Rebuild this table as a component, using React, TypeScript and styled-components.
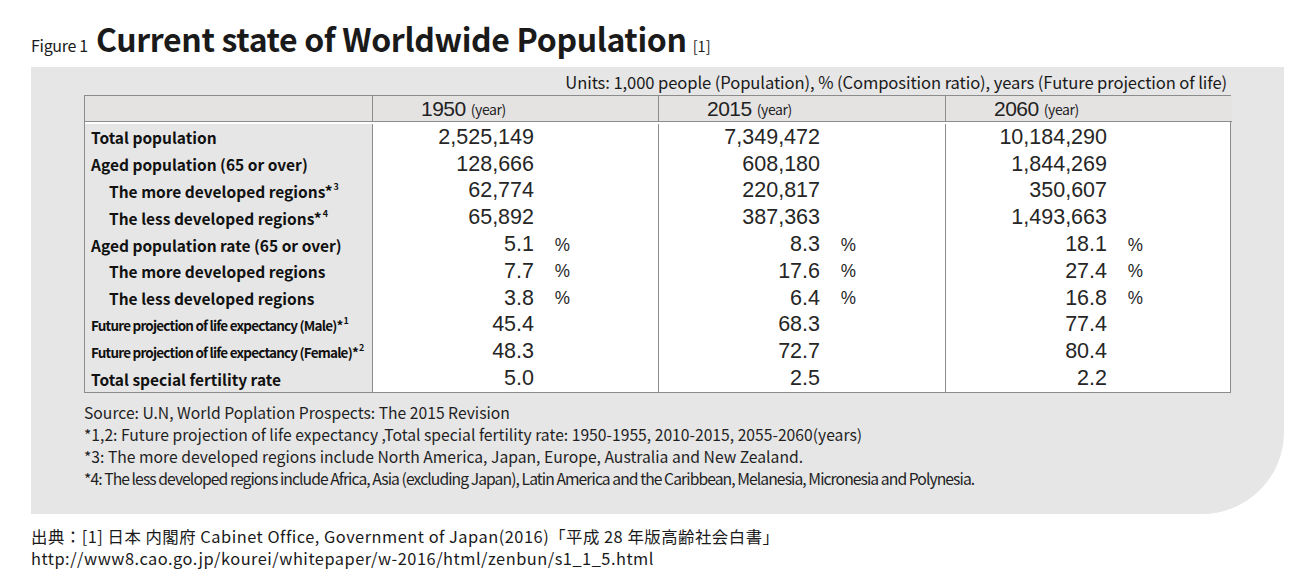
import React from "react";
import styled, { createGlobalStyle } from "styled-components";

const Global = createGlobalStyle`
  html, body { margin: 0; padding: 0; background: #ffffff; }
  body { font-family: "Noto Sans CJK JP", "Noto Sans", sans-serif; color: #1a1a1a; }
`;

const Page = styled.div`
  width: 1310px;
  height: 581px;
  padding: 22px 0 0 31px;
  box-sizing: border-box;
  overflow: hidden;
`;

const TitleRow = styled.div`
  display: flex;
  align-items: baseline;
  height: 45px;
`;

const FigLabel = styled.span`
  font-size: 16px;
  margin-right: 8px;
  letter-spacing: -0.3px;
`;

const Title = styled.h1`
  margin: 0;
  font-size: 32px;
  font-weight: 700;
  line-height: 1;
  letter-spacing: -0.35px;
`;

const Ref = styled.span`
  font-size: 14.5px;
  margin-left: 6px;
`;

const Panel = styled.div`
  width: 1253px;
  height: 447px;
  background: #e6e6e6;
  border-bottom-right-radius: 82px;
  box-sizing: border-box;
  padding: 3px 0 0 53px;
`;

const Units = styled.div`
  width: 1143px;
  text-align: right;
  font-size: 16.6px;
  line-height: 25px;
  height: 25px;
  letter-spacing: -0.1px;
  white-space: nowrap;
`;

const Table = styled.div`
  display: grid;
  grid-template-columns: 287px 286px 287px 287px;
  width: 1147px;
  border: 1px solid #8c8c8c;
  box-sizing: border-box;
  background: #ffffff;
`;

const HeadCell = styled.div<{ $first?: boolean }>`
  height: 25px;
  background: #e5e2e2;
  border-bottom: 1px solid #8c8c8c;
  border-left: ${(p) => (p.$first ? "none" : "1px solid #8c8c8c")};
  padding-left: 48px;
  display: flex;
  align-items: center;
  font-family: "Liberation Sans", Arial, sans-serif;
  color: #222;
`;

const Year = styled.span`
  font-size: 21px;
  letter-spacing: -0.5px;
`;

const YearUnit = styled.span`
  font-size: 14px;
  margin-left: 5px;
  font-family: "Noto Sans CJK JP", sans-serif;
  letter-spacing: -0.4px;
`;

const LabelCell = styled.div<{ $indent?: boolean; $narrow?: boolean; $top?: boolean }>`
  height: 26.8px;
  background: #e6e6e6;
  padding-left: ${(p) => (p.$indent ? 24 : 6)}px;
  display: flex;
  align-items: center;
  font-weight: 700;
  font-size: ${(p) => (p.$narrow ? 13.5 : 15.5)}px;
  letter-spacing: ${(p) => (p.$narrow ? "-0.8px" : "0")};
  white-space: nowrap;
  color: #111;
  margin-top: ${(p) => (p.$top ? 2 : 0)}px;
`;

const Sup = styled.span`
  font-size: 9px;
  position: relative;
  top: -4px;
  margin-left: 1px;
`;

const ValueCell = styled.div<{ $top?: boolean }>`
  height: 26.8px;
  border-left: 1px solid #8c8c8c;
  display: flex;
  align-items: center;
  font-family: "Liberation Sans", Arial, sans-serif;
  font-size: 21.5px;
  color: #262626;
  margin-top: ${(p) => (p.$top ? 2 : 0)}px;
`;

const Num = styled.span`
  width: 161px;
  text-align: right;
`;

const Pct = styled.span`
  margin-left: 20px;
  font-size: 19px;
  transform: scaleX(0.9);
  display: inline-block;
`;

const Notes = styled.div`
  margin-top: 9px;
  font-size: 15.7px;
  line-height: 22px;
  color: #1f1f1f;
`;

const Note = styled.div<{ $narrow?: boolean }>`
  letter-spacing: ${(p) => (p.$narrow ? "-0.93px" : "0")};
  white-space: nowrap;
`;

const Source = styled.div`
  margin-top: 11px;
  font-size: 16.4px;
  line-height: 22px;
  color: #1a1a1a;
  letter-spacing: 0.5px;
  white-space: nowrap;
`;

type Row = {
  label: string;
  sup?: string;
  indent?: boolean;
  narrow?: boolean;
  vals: string[];
  pct?: boolean;
};

const rows: Row[] = [
  { label: "Total population", vals: ["2,525,149", "7,349,472", "10,184,290"] },
  { label: "Aged population (65 or over)", vals: ["128,666", "608,180", "1,844,269"] },
  { label: "The more developed regions*", sup: "3", indent: true, vals: ["62,774", "220,817", "350,607"] },
  { label: "The less developed regions*", sup: "4", indent: true, vals: ["65,892", "387,363", "1,493,663"] },
  { label: "Aged population rate (65 or over)", vals: ["5.1", "8.3", "18.1"], pct: true },
  { label: "The more developed regions", indent: true, vals: ["7.7", "17.6", "27.4"], pct: true },
  { label: "The less developed regions", indent: true, vals: ["3.8", "6.4", "16.8"], pct: true },
  { label: "Future projection of life expectancy (Male)*", sup: "1", narrow: true, vals: ["45.4", "68.3", "77.4"] },
  { label: "Future projection of life expectancy (Female)*", sup: "2", narrow: true, vals: ["48.3", "72.7", "80.4"] },
  { label: "Total special fertility rate", vals: ["5.0", "2.5", "2.2"] },
];

const years = ["1950", "2015", "2060"];

export default function App() {
  return (
    <Page>
      <Global />
      <TitleRow>
        <FigLabel>Figure 1</FigLabel>
        <Title>Current state of Worldwide Population</Title>
        <Ref>[1]</Ref>
      </TitleRow>
      <Panel>
        <Units>Units: 1,000 people (Population), % (Composition ratio), years (Future projection of life)</Units>
        <Table>
          <HeadCell $first />
          {years.map((y) => (
            <HeadCell key={y}>
              <Year>{y}</Year>
              <YearUnit>(year)</YearUnit>
            </HeadCell>
          ))}
          {rows.map((r, i) => (
            <React.Fragment key={r.label}>
              <LabelCell $indent={r.indent} $narrow={r.narrow} $top={i === 0}>
                {r.label}
                {r.sup && <Sup>{r.sup}</Sup>}
              </LabelCell>
              {r.vals.map((v, j) => (
                <ValueCell key={j} $top={i === 0}>
                  <Num>{v}</Num>
                  {r.pct && <Pct>%</Pct>}
                </ValueCell>
              ))}
            </React.Fragment>
          ))}
        </Table>
        <Notes>
          <Note>Source: U.N, World Poplation Prospects: The 2015 Revision</Note>
          <Note>*1,2: Future projection of life expectancy ,Total special fertility rate: 1950-1955, 2010-2015, 2055-2060(years)</Note>
          <Note>*3: The more developed regions include North America, Japan, Europe, Australia and New Zealand.</Note>
          <Note $narrow>*4: The less developed regions include Africa, Asia (excluding Japan), Latin America and the Caribbean, Melanesia, Micronesia and Polynesia.</Note>
        </Notes>
      </Panel>
      <Source>
        <div>出典：[1] 日本 内閣府 Cabinet Office, Government of Japan(2016)「平成 28 年版高齢社会白書」</div>
        <div>http://www8.cao.go.jp/kourei/whitepaper/w-2016/html/zenbun/s1_1_5.html</div>
      </Source>
    </Page>
  );
}
